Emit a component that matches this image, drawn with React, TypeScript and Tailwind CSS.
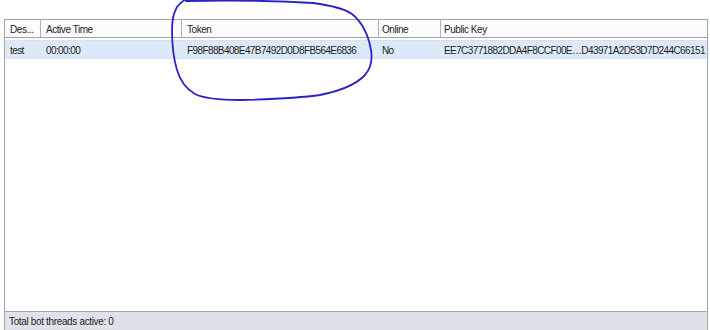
import React from "react";

const cols = [
  { label: "Des...", w: "w-[36px]", pl: "pl-[5px]" },
  { label: "Active Time", w: "w-[141px]", pl: "pl-[5px]" },
  { label: "Token", w: "w-[197px]", pl: "pl-[5px]" },
  { label: "Online", w: "w-[62px]", pl: "pl-[3px]" },
  { label: "Public Key", w: "flex-1", pl: "pl-[3px]" },
];

const row = [
  "test",
  "00:00:00",
  "F98F88B408E47B7492D0D8FB564E6836",
  "No",
  "EE7C3771882DDA4F8CCF00E\u2026D43971A2D53D7D244C66151",
];

export default function App() {
  return (
    <div
      className="relative w-[710px] h-[330px] bg-white text-[10px] text-[#1e1e1e] overflow-hidden"
      style={{ fontFamily: '"Liberation Sans", Arial, sans-serif' }}
    >
      <div className="flex flex-col h-full pt-[19px] pl-[4px] pr-[2px]">
        <div className="flex-1 flex flex-col border-l border-r border-[#a3a8b0] min-h-0">
          {/* header */}
          <div className="flex h-[19px] border-t border-b border-[#a0a4aa] bg-[#fbfbfb] tracking-[-0.45px]">
            {cols.map((c, i) => (
              <div
                key={i}
                className={`${c.w} ${c.pl} ${i < cols.length - 1 ? "border-r border-[#b0b4ba]" : ""} flex items-center pt-px whitespace-nowrap overflow-hidden`}
              >
                {c.label}
              </div>
            ))}
          </div>
          {/* row */}
          <div className="flex h-[19px] mt-[2px] bg-[#dde9f8] border-t border-b border-[#d2e2f4] tracking-[-0.6px]">
            {cols.map((c, i) => (
              <div
                key={i}
                className={`${c.w} ${c.pl} ${i < cols.length - 1 ? "border-r border-transparent" : ""} flex items-center pt-px whitespace-nowrap overflow-hidden`}
              >
                {row[i]}
              </div>
            ))}
          </div>
          <div className="flex-1" />
          {/* status bar */}
          <div className="h-[19px] border-t border-[#9ea3aa] bg-[#dfe3e9] flex items-center pt-px pl-[4px] tracking-[-0.35px]">
            Total bot threads active: 0
          </div>
        </div>
      </div>
      <svg
        className="absolute left-0 top-0 pointer-events-none"
        width="710"
        height="330"
        viewBox="0 0 710 330"
      >
        <path
          d="M186,1 C230,0 280,1 313,3 C335,6 345,9 352,14 C362,22 368,33 371,50 C373,62 370,70 364,76 C356,84 340,91 320,95 C300,98 280,99 240,100 C220,100 205,99 195,94 C186,89 180,80 177,70 C174,60 172,45 172,30 C172,20 174,12 177,7 C179,4 183,1 186,-1"
          fill="none"
          stroke="#2a24c4"
          strokeWidth="1.8"
          strokeLinecap="round"
        />
      </svg>
    </div>
  );
}
